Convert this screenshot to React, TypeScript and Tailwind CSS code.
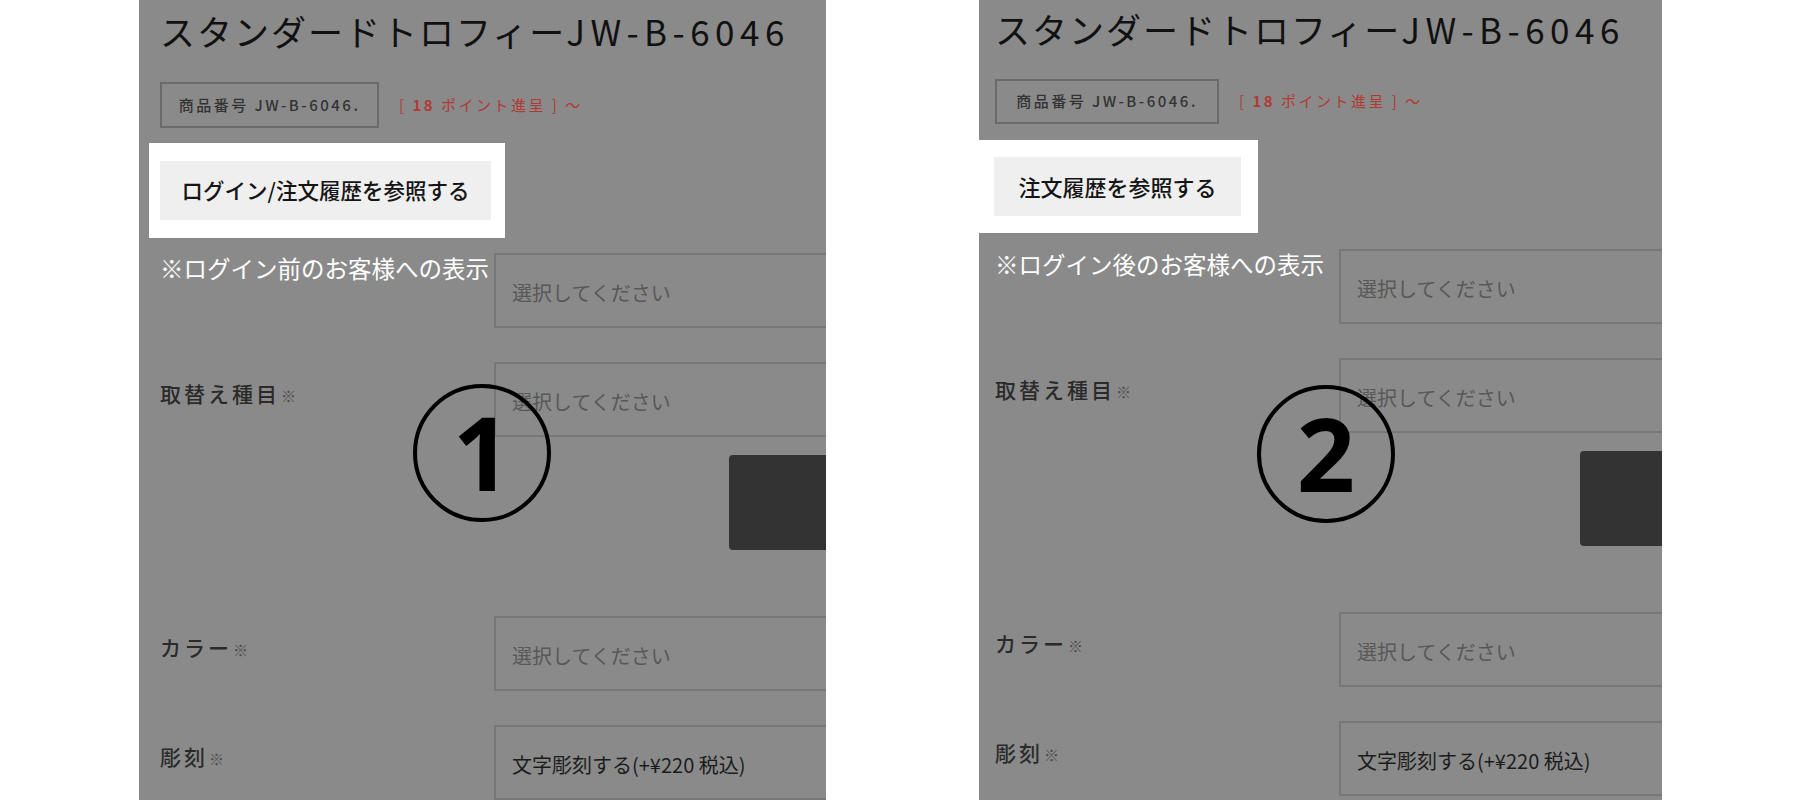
import React from "react";

const jp = "font-['Noto_Sans_CJK_JP','Noto_Sans',sans-serif]";

type PanelStyle = {
    panel: string;
    content: string;
    title: string;
    boxRow: string;
    box: string;
    white: string;
    button: string;
    rows: string;
    labelCol: string;
    squareOffset: string;
    circle: string;
};

const left: PanelStyle = {
    panel: "ml-[139px] w-[687px]",
    content: "pl-[21px]",
    title: "pt-[9px]",
    boxRow: "mt-[29px]",
    box: "w-[219px] h-[46px]",
    white: "mt-[15px] -ml-[11px] w-[356px] h-[95px] pt-[18px] pl-[11px]",
    button: "w-[331px] text-[21.5px]",
    rows: "mt-[15px]",
    labelCol: "w-[334px]",
    squareOffset: "ml-[235px]",
    circle: "left-[274px] top-[384px]",
};

const right: PanelStyle = {
    panel: "ml-[153px] w-[683px]",
    content: "pl-[16px]",
    title: "pt-[7px]",
    boxRow: "mt-[28px]",
    box: "w-[224px] h-[45px]",
    white: "mt-[16px] -ml-[16px] w-[279px] h-[93px] pt-[17px] pl-[15px]",
    button: "w-[247px] text-[22px]",
    rows: "mt-[16px]",
    labelCol: "w-[344px]",
    squareOffset: "ml-[241px]",
    circle: "left-[278px] top-[385px]",
};

// One form row: label on the left, select box running off the panel edge
function Row({
    label,
    value,
    filled,
    labelCol,
    children,
    className = "",
}: {
    label: React.ReactNode;
    value: string;
    filled?: boolean;
    labelCol: string;
    children?: React.ReactNode;
    className?: string;
}) {
    return (
        <div className={`flex items-start ${className}`}>
            <div className={`${labelCol} shrink-0`}>{label}</div>
            <div className="w-[420px] shrink-0">
                <div
                    className={`h-[75px] border-2 border-[#777777] flex items-center pl-[16px] pt-[4px] text-[20px] ${
                        filled ? "text-[#1c1c1c]" : "text-[#585858]"
                    }`}
                >
                    {value}
                </div>
                {children}
            </div>
        </div>
    );
}

function FieldLabel({ text }: { text: string }) {
    return (
        <div className="pt-[17px] text-[21px] leading-[28px] font-medium tracking-[3px] text-[#2a2a2a] whitespace-nowrap">
            {text}
            <span className="ml-[1px] text-[15px] font-normal text-[#4d4d4d] tracking-normal">※</span>
        </div>
    );
}

function Panel({ s, num, button, note }: { s: PanelStyle; num: string; button: string; note: string }) {
    return (
        <div className={`${s.panel} relative h-[800px] shrink-0 bg-[#8a8a8a] overflow-hidden ${jp}`}>
            <div className={s.content}>
                {/* Product title */}
                <h1 className={`${s.title} text-[35px] leading-[44px] font-normal tracking-[2px] text-[#111111] whitespace-nowrap`}>
                    スタンダードトロフィー<span className="tracking-[5.5px]">JW-B-6046</span>
                </h1>

                {/* Product number + points */}
                <div className={`${s.boxRow} flex items-center`}>
                    <div
                        className={`${s.box} border-2 border-[#6a6a6a] flex items-center justify-center text-[15px] font-medium tracking-[2.5px] text-[#333333] whitespace-nowrap`}
                    >
                        商品番号 JW-B-6046.
                    </div>
                    <span className="ml-[20px] text-[15px] tracking-[2.5px] text-[#b03a33] whitespace-nowrap">
                        [ <span className="font-bold">18</span> ポイント進呈 ] ～
                    </span>
                </div>

                {/* Highlighted order-history button */}
                <div className={`${s.white} bg-white`}>
                    <div
                        className={`${s.button} h-[59px] bg-[#efefef] flex items-center justify-center font-medium text-[#151515] whitespace-nowrap`}
                    >
                        {button}
                    </div>
                </div>

                {/* Form rows */}
                <div className={s.rows}>
                    <Row
                        labelCol={s.labelCol}
                        value="選択してください"
                        label={
                            <div className="text-[23.5px] leading-[30px] text-white whitespace-nowrap">{note}</div>
                        }
                    />
                    <Row
                        className="mt-[34px]"
                        labelCol={s.labelCol}
                        value="選択してください"
                        label={<FieldLabel text="取替え種目" />}
                    >
                        <div className={`${s.squareOffset} mt-[18px] w-[110px] h-[95px] rounded-[4px] bg-[#333333]`} />
                    </Row>
                    <Row
                        className="mt-[66px]"
                        labelCol={s.labelCol}
                        value="選択してください"
                        label={<FieldLabel text="カラー" />}
                    />
                    <Row
                        className="mt-[34px]"
                        labelCol={s.labelCol}
                        value="文字彫刻する(+¥220 税込)"
                        filled
                        label={<FieldLabel text="彫刻" />}
                    />
                </div>
            </div>

            {/* Circled step number */}
            <div
                className={`absolute ${s.circle} w-[138px] h-[138px] rounded-full border-4 border-black flex items-center justify-center`}
            >
                <span className="text-[102px] leading-none font-bold text-black font-['Noto_Sans',sans-serif] -mt-[2px]">
                    {num}
                </span>
            </div>
        </div>
    );
}

export default function App() {
    return (
        <div className="w-[1800px] h-[800px] bg-white flex overflow-hidden">
            <Panel s={left} num="1" button="ログイン/注文履歴を参照する" note="※ログイン前のお客様への表示" />
            <Panel s={right} num="2" button="注文履歴を参照する" note="※ログイン後のお客様への表示" />
        </div>
    );
}
